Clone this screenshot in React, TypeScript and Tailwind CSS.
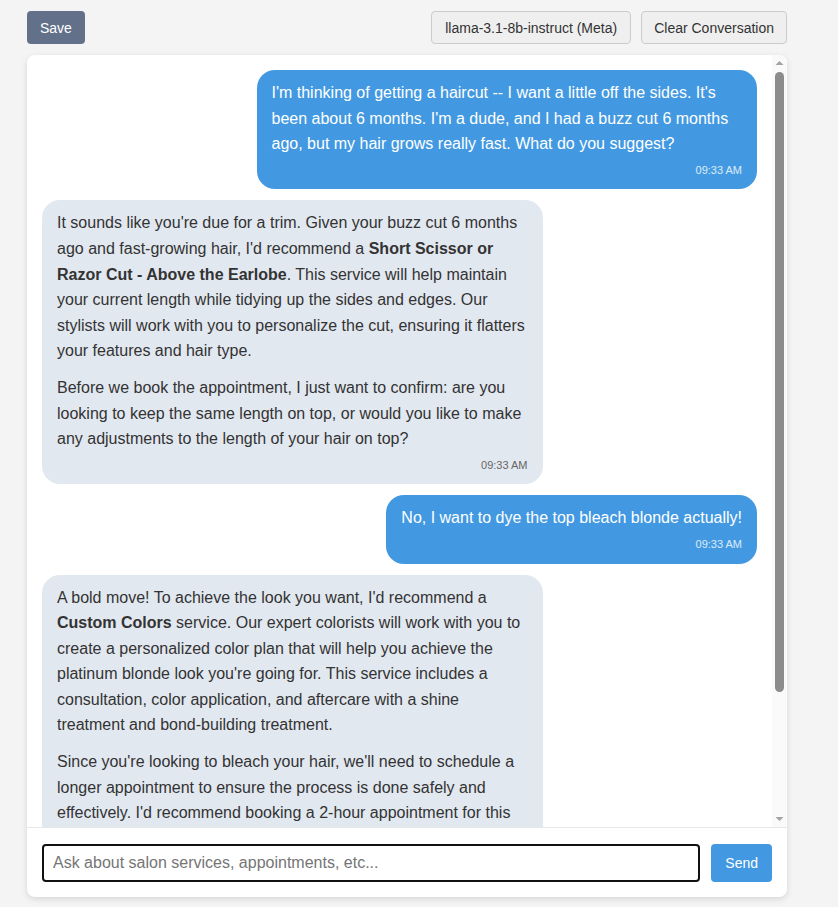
import { useState } from 'react';

type Msg = {
  role: 'user' | 'assistant';
  parts: React.ReactNode[];
  time: string;
};

const messages: Msg[] = [
  {
    role: 'user',
    time: '09:33 AM',
    parts: [
      "I'm thinking of getting a haircut -- I want a little off the sides. It's been about 6 months. I'm a dude, and I had a buzz cut 6 months ago, but my hair grows really fast. What do you suggest?",
    ],
  },
  {
    role: 'assistant',
    time: '09:33 AM',
    parts: [
      <>
        It sounds like you're due for a trim. Given your buzz cut 6 months ago and fast-growing hair, I'd recommend a{' '}
        <strong>Short Scissor or Razor Cut - Above the Earlobe</strong>. This service will help maintain your current
        length while tidying up the sides and edges. Our stylists will work with you to personalize the cut, ensuring it
        flatters your features and hair type.
      </>,
      'Before we book the appointment, I just want to confirm: are you looking to keep the same length on top, or would you like to make any adjustments to the length of your hair on top?',
    ],
  },
  {
    role: 'user',
    time: '09:33 AM',
    parts: ['No, I want to dye the top bleach blonde actually!'],
  },
  {
    role: 'assistant',
    time: '09:33 AM',
    parts: [
      <>
        A bold move! To achieve the look you want, I'd recommend a <strong>Custom Colors</strong> service. Our expert
        colorists will work with you to create a personalized color plan that will help you achieve the platinum blonde
        look you're going for. This service includes a consultation, color application, and aftercare with a shine
        treatment and bond-building treatment.
      </>,
      "Since you're looking to bleach your hair, we'll need to schedule a longer appointment to ensure the process is done safely and effectively. I'd recommend booking a 2-hour appointment for this service. Would you like me to check availability?",
    ],
  },
];

function Bubble({ m }: { m: Msg }) {
  const isUser = m.role === 'user';
  return (
    <div
      className={
        isUser
          ? 'self-end max-w-[70%] rounded-[18px] bg-[#4299e1] px-[15px] py-[10px] text-white'
          : 'self-start max-w-[70%] rounded-[18px] bg-[#e2e8f0] px-[15px] py-[10px] text-[#333]'
      }
    >
      {m.parts.map((p, i) => (
        <p key={i} className={i < m.parts.length - 1 ? 'mb-[11px]' : ''}>
          {p}
        </p>
      ))}
      <div className={isUser ? 'mt-[5px] text-right text-[11px] text-white/80' : 'mt-[5px] text-right text-[11px] text-[#666]'}>
        {m.time}
      </div>
    </div>
  );
}

// drawn scrollbar, matching the classic one in the screenshot
function Scrollbar() {
  return (
    <div className="w-[15px] shrink-0 bg-[#fafafa] flex flex-col items-center">
      <svg width="15" height="15" viewBox="0 0 15 15" className="shrink-0">
        <path d="M3.5 10 L7.5 6 L11.5 10 Z" fill="#a3a3a3" />
      </svg>
      <div className="flex-1 w-full flex flex-col px-[3px]">
        <div className="h-[620px] mt-[2px] rounded-full bg-[#8c8c8c]" />
      </div>
      <svg width="15" height="15" viewBox="0 0 15 15" className="shrink-0">
        <path d="M3.5 5 L7.5 9 L11.5 5 Z" fill="#a3a3a3" />
      </svg>
    </div>
  );
}

export default function App() {
  const [text, setText] = useState('');

  return (
    <div
      className="h-[907px] bg-[#f4f4f4] pl-[27px] pt-[11px] pb-[10px] flex flex-col"
      style={{ fontFamily: '"Liberation Sans", Arial, sans-serif' }}
    >
      <div className="w-[760px] flex items-center justify-between">
        <button type="button" className="h-[33px] px-[13px] rounded-[4px] bg-[#627189] text-white text-sm">
          Save
        </button>
        <div className="flex items-center gap-[10px]">
          <button type="button" className="h-[33px] px-[13px] rounded-[4px] border border-[#ccc] bg-[#efefef] text-[#333] text-sm">
            llama-3.1-8b-instruct (Meta)
          </button>
          <button type="button" className="h-[33px] px-[12px] rounded-[4px] border border-[#ccc] bg-[#efefef] text-[#333] text-sm">
            Clear Conversation
          </button>
        </div>
      </div>

      <div className="mt-[11px] w-[760px] flex-1 min-h-0 flex flex-col rounded-[8px] bg-white shadow-[0_2px_6px_rgba(0,0,0,0.12)] overflow-hidden">
        <div className="flex-1 min-h-0 flex">
          <div className="flex-1 min-w-0 overflow-hidden p-[15px] flex flex-col gap-[11px] text-base leading-[1.6]">
            {messages.map((m, i) => (
              <Bubble key={i} m={m} />
            ))}
          </div>
          <Scrollbar />
        </div>
        <div className="border-t border-[#e5e7eb] px-[15px] pt-[16px] pb-[15px] flex items-center gap-[11px]">
          <input
            autoFocus
            value={text}
            onChange={(e) => setText(e.target.value)}
            placeholder="Ask about salon services, appointments, etc..."
            className="flex-1 h-[38px] rounded-[4px] border-2 border-[#111] px-[9px] text-base text-[#333] placeholder:text-[#757575] outline-none"
          />
          <button type="button" className="h-[38px] px-[14px] rounded-[4px] bg-[#4299e1] text-white text-sm">
            Send
          </button>
        </div>
      </div>
    </div>
  );
}
